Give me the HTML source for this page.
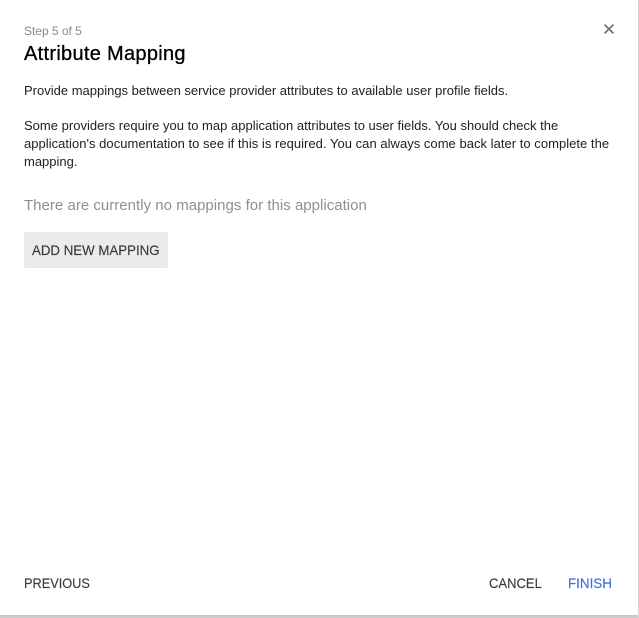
<!DOCTYPE html>
<html>
<head>
<meta charset="utf-8">
<style>
html,body{margin:0;padding:0;width:639px;height:618px;overflow:hidden;background:#fff;}
body{position:relative;font-family:"Liberation Sans",sans-serif;}
.bg{position:absolute;left:0;top:0;width:639px;height:618px;background:linear-gradient(#fff 0,#fff 615px,#c4c4c4 615px,#cfcfcf 618px);}
.r{position:absolute;left:638px;top:0;width:1px;height:618px;background:#d6d6d6;}
.d{position:absolute;left:0;top:0;width:638px;height:615px;background:#fff;border-radius:0 0 2px 2px;}
.t{position:absolute;white-space:nowrap;line-height:20px;}
.p{font-size:13px;color:#212121;}
.btn{position:absolute;left:24px;top:232px;width:144px;height:36px;background:#ebebeb;border-radius:2px;}
.b{font-size:14px;color:#3a3a3a;-webkit-text-stroke:.15px currentColor;transform-origin:0 50%;}
</style>
</head>
<body>
<div class="bg"></div>
<div class="r"></div>
<div class="d"></div>
<div class="t" style="left:24px;top:21px;font-size:12px;color:#8a8a8a;letter-spacing:-.02px;">Step 5 of 5</div>
<div class="t" style="left:24px;top:44px;font-size:20px;color:#000;letter-spacing:.3px;-webkit-text-stroke:.3px #000;">Attribute Mapping</div>
<svg style="position:absolute;left:603px;top:23px" width="12" height="12" viewBox="0 0 12 12"><path d="M1.6 1.6L10.4 10.4M10.4 1.6L1.6 10.4" stroke="#757575" stroke-width="1.8" fill="none"/></svg>
<div class="t p" style="left:24px;top:81px;">Provide mappings between service provider attributes to available user profile fields.</div>
<div class="t p" style="left:24px;top:116px;letter-spacing:.01px;">Some providers require you to map application attributes to user fields. You should check the</div>
<div class="t p" style="left:24px;top:134px;letter-spacing:.03px;">application's documentation to see if this is required. You can always come back later to complete the</div>
<div class="t p" style="left:24px;top:152px;">mapping.</div>
<div class="t" style="left:24px;top:196px;font-size:15px;color:#8f8f8f;letter-spacing:.02px;">There are currently no mappings for this application</div>
<div class="btn"></div>
<div class="t b" style="left:32px;top:240px;transform:scaleX(.948);">ADD NEW MAPPING</div>
<div class="t b" style="left:24px;top:573px;transform:scaleX(.91);">PREVIOUS</div>
<div class="t b" style="left:489px;top:573px;transform:scaleX(.93);">CANCEL</div>
<div class="t b" style="left:568px;top:573px;color:#3f6fd8;transform:scaleX(.957);">FINISH</div>
</body>
</html>
